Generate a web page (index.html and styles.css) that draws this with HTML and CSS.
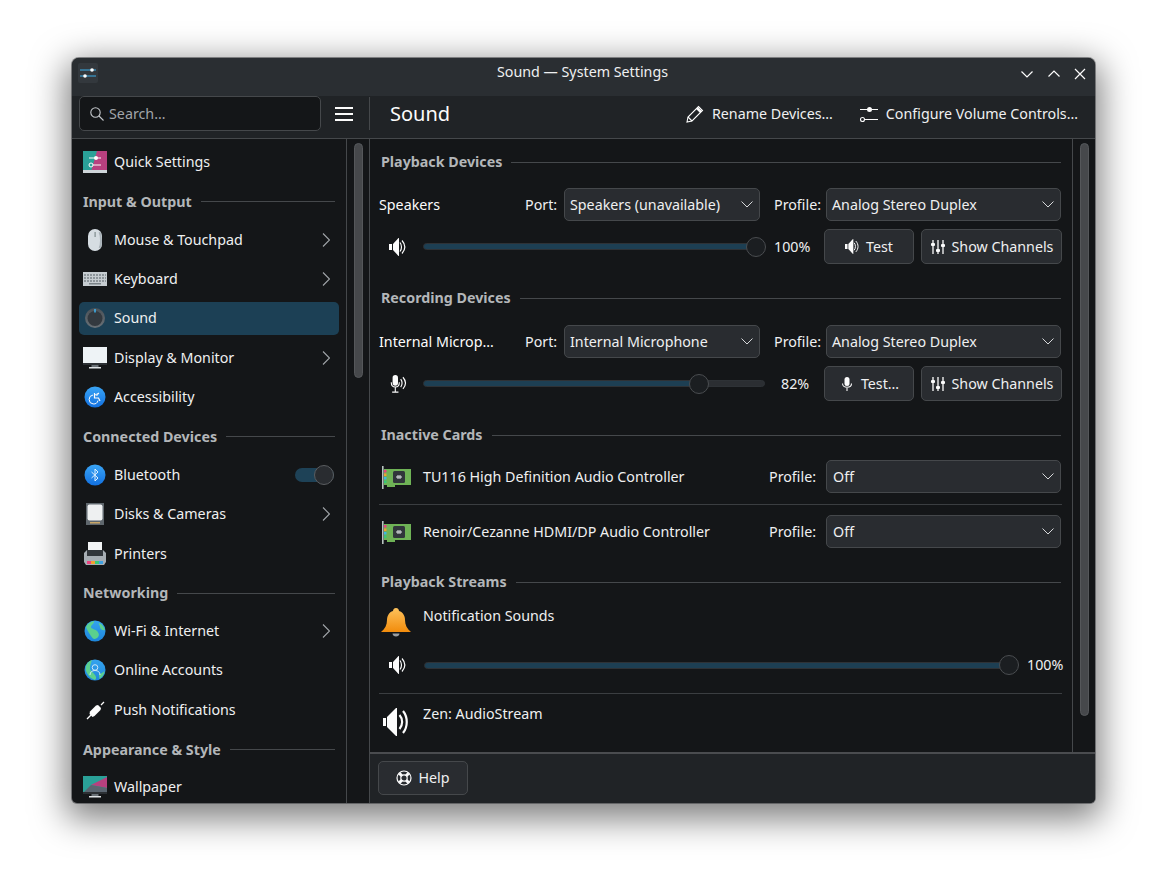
FILE: index.html
```html
<!DOCTYPE html>
<html lang="en">
<head>
<meta charset="utf-8">
<title>Sound — System Settings</title>
<link rel="stylesheet" href="styles.css">
</head>
<body>
<svg class="defs" width="0" height="0" aria-hidden="true">
  <defs>
    <symbol id="chev-down" viewBox="0 0 12 7"><path d="M.5 .5L6 6l5.500-5.500" fill="none" stroke="currentColor" stroke-width="1"/></symbol>
    <symbol id="chev-right" viewBox="0 0 8 14"><path d="M1 .5L7.500 7 1 13.500" fill="none" stroke="currentColor" stroke-width="1.100"/></symbol>
    <symbol id="speaker" viewBox="0 0 18 18"><path d="M0 6h3v6H0z" fill="#fcfcfc"/><path d="M4 6L9.500 0h.5v18h-.5L4 12z" fill="#fcfcfc"/><path d="M11 4.500c2 2.500 2 6.500 0 9M13 2.500c3.500 4 3.500 9 0 13" fill="none" stroke="#fcfcfc" stroke-width="1.200"/></symbol>
    <symbol id="channels" viewBox="0 0 16 16"><path d="M3 1v14M8 1v14M13 1v14" stroke="#fcfcfc" stroke-width="1.300" fill="none"/><rect x="1" y="4" width="4" height="3" rx="1" fill="#fcfcfc"/><rect x="6" y="10" width="4" height="3" rx="1" fill="#fcfcfc"/><rect x="11" y="5" width="4" height="3" rx="1" fill="#fcfcfc"/></symbol>
    <symbol id="card" viewBox="0 0 32 24">
      <rect x="1" y="1" width="1.600" height="23" fill="#b8c4c0"/>
      <path d="M3 4h27v16H14v2H6v-2H3z" fill="#6fb356"/>
      <rect x="3" y="5" width="2.500" height="2.500" fill="#e9437f"/><rect x="3" y="8.500" width="2.500" height="2.500" fill="#f0a030"/><rect x="3" y="12" width="2.500" height="2.500" fill="#3fb8e0"/><rect x="3" y="15.500" width="2.500" height="2.500" fill="#38c878"/>
      <rect x="12" y="6" width="12" height="12" rx="1.500" fill="#31363b"/>
      <path d="M15 12h6M17 10v4M19 10v4" stroke="#dfe3e6" stroke-width="1"/>
    </symbol>
    <linearGradient id="globe" x1="0" y1="0" x2="0" y2="1"><stop offset="0" stop-color="#35a4ee"/><stop offset="1" stop-color="#1d86dc"/></linearGradient>
    <linearGradient id="bluec" x1="0" y1="0" x2="0" y2="1"><stop offset="0" stop-color="#3aa5f5"/><stop offset="1" stop-color="#1270e0"/></linearGradient>
    <linearGradient id="bell" x1="0" y1="0" x2="0" y2="1"><stop offset="0" stop-color="#fdc25c"/><stop offset="1" stop-color="#f28c0c"/></linearGradient>
    <linearGradient id="knob" x1="0" y1="0" x2="0" y2="1"><stop offset="0" stop-color="#4a5157"/><stop offset="1" stop-color="#6a7177"/></linearGradient>
  </defs>
</svg>

<main class="window">
  <header class="titlebar">
    <svg class="app-icon" width="20" height="20" viewBox="0 0 20 20"><rect width="20" height="20" rx="2" fill="#33383d"/><path d="M2 7h16" stroke="#3daee9" stroke-width="1.200"/><path d="M2 13h16" stroke="#3daee9" stroke-width="1.200"/><circle cx="14" cy="7" r="1.800" fill="#fcfcfc"/><circle cx="7" cy="13" r="1.800" fill="#fcfcfc"/></svg>
    <h1 class="win-title">Sound — System Settings</h1>
    <div class="win-buttons">
      <svg class="win-btn win-min" width="14" height="14" viewBox="0 0 14 14"><path d="M1.500 4.500L7 10l5.500-5.500" fill="none" stroke="#fcfcfc" stroke-width="1.200"/></svg>
      <svg class="win-btn" width="14" height="14" viewBox="0 0 14 14"><path d="M1.500 9.500L7 4l5.500 5.500" fill="none" stroke="#fcfcfc" stroke-width="1.200"/></svg>
      <svg class="win-btn" width="14" height="14" viewBox="0 0 14 14"><path d="M2 2l10 10M12 2L2 12" fill="none" stroke="#fcfcfc" stroke-width="1.200"/></svg>
    </div>
  </header>

  <div class="toolbar">
    <div class="tb-left">
      <div class="search">
        <svg width="16" height="16" viewBox="0 0 16 16"><circle cx="6.500" cy="6.500" r="4.700" fill="none" stroke="#c4c8cc" stroke-width="1.100"/><path d="M10 10l4.500 4.500" stroke="#c4c8cc" stroke-width="1.100"/></svg>
        <span class="search-text">Search…</span>
      </div>
      <svg class="burger" width="18" height="14" viewBox="0 0 18 14"><path d="M0 1h18M0 7h18M0 13h18" stroke="#fcfcfc" stroke-width="2"/></svg>
    </div>
    <div class="tb-right">
      <h2 class="page-title">Sound</h2>
      <div class="tb-action">
        <svg width="18" height="18" viewBox="0 0 18 18"><path d="M1 17l1-5L12.500 1.500l4 4L6 16z" fill="none" stroke="#fcfcfc" stroke-width="1.100"/><path d="M11 3l4 4" stroke="#fcfcfc" stroke-width="2.500"/><path d="M2 12l4 4" stroke="#fcfcfc" stroke-width="1.100"/></svg>
        <span>Rename Devices…</span>
      </div>
      <div class="tb-action tb-action-last">
        <svg width="18" height="18" viewBox="0 0 18 18"><path d="M0 4.500h18" stroke="#fcfcfc" stroke-width="1.100"/><circle cx="9.500" cy="4.500" r="2.500" fill="#fcfcfc"/><path d="M5 14.500h13" stroke="#fcfcfc" stroke-width="1.100"/><circle cx="2.500" cy="14.500" r="2" fill="#1f2226" stroke="#fcfcfc" stroke-width="1.100"/></svg>
        <span>Configure Volume Controls…</span>
      </div>
    </div>
  </div>

  <div class="body-row">
    <nav class="sidebar">
      <div class="side-item">
        <svg class="side-icon" width="24" height="22" viewBox="0 0 24 22"><rect width="24" height="21" fill="#2aa198"/><path d="M14 0h10v21H8z" fill="#b8407f"/><rect y="19" width="24" height="3" fill="#d0d6da"/><path d="M6 7h12M6 14h12" stroke="#fcfcfc" stroke-width="1"/><circle cx="13" cy="7" r="2" fill="#fcfcfc"/><circle cx="8" cy="14" r="2" fill="#2aa198" stroke="#fcfcfc"/></svg>
        <span>Quick Settings</span>
      </div>
      <div class="side-head"><span>Input &amp; Output</span></div>
      <div class="side-item">
        <svg class="side-icon" width="24" height="22" viewBox="0 0 24 22"><rect x="5" y="0" width="14" height="22" rx="7" fill="#d6dde2"/><rect x="11.500" y="3" width="1.200" height="5" fill="#7f8c8d"/><path d="M16.500 3c2 4 2 13 0 16" stroke="#aab3b9" stroke-width="2" fill="none"/></svg>
        <span>Mouse &amp; Touchpad</span>
        <svg class="chev" width="8" height="14"><use href="#chev-right"/></svg>
      </div>
      <div class="side-item">
        <svg class="side-icon" width="24" height="16" viewBox="0 0 24 16"><rect width="24" height="14" y="1" fill="#c6ccd0"/><path d="M1 4h22M1 7h22M1 10h22" stroke="#7b8388" stroke-width="1.300" stroke-dasharray="2 1"/><rect x="6" y="12" width="12" height="1.500" fill="#7b8388"/></svg>
        <span>Keyboard</span>
        <svg class="chev" width="8" height="14"><use href="#chev-right"/></svg>
      </div>
      <div class="side-item selected">
        <svg class="side-icon" width="24" height="24" viewBox="0 0 24 24"><circle cx="12" cy="12" r="10" fill="url(#knob)"/><circle cx="12" cy="12.500" r="7.500" fill="#33393f"/><rect x="11.200" y="3" width="1.600" height="3.500" fill="#3daee9"/></svg>
        <span>Sound</span>
      </div>
      <div class="side-item">
        <svg class="side-icon" width="24" height="22" viewBox="0 0 24 22"><rect y="0" width="24" height="18" fill="#eef3f6"/><rect y="16" width="24" height="2" fill="#2c3034"/><rect x="8.500" y="18" width="7" height="2" fill="#6b7278"/><rect x="6" y="20" width="12" height="1.500" fill="#dfe3e6"/></svg>
        <span>Display &amp; Monitor</span>
        <svg class="chev" width="8" height="14"><use href="#chev-right"/></svg>
      </div>
      <div class="side-item">
        <svg class="side-icon" width="24" height="24" viewBox="0 0 24 24"><circle cx="12" cy="12" r="10.500" fill="url(#bluec)"/><path d="M10 10a4.500 4.500 0 1 0 5 5.500" fill="none" stroke="#fcfcfc" stroke-width="1"/><path d="M11.500 8v5h4l1.500 3" fill="none" stroke="#fcfcfc" stroke-width="1.200"/><path d="M12 10l4-2-2.500 3" fill="none" stroke="#fcfcfc"/></svg>
        <span>Accessibility</span>
      </div>
      <div class="side-head"><span>Connected Devices</span></div>
      <div class="side-item">
        <svg class="side-icon" width="24" height="24" viewBox="0 0 24 24"><circle cx="12" cy="12" r="10.500" fill="url(#bluec)"/><path d="M8.500 9l6.500 6-3 3V6l3 3-6.500 6" fill="none" stroke="#dff1ff" stroke-width="1"/></svg>
        <span>Bluetooth</span>
        <span class="toggle"><span class="toggle-knob"></span></span>
      </div>
      <div class="side-item">
        <svg class="side-icon" width="24" height="24" viewBox="0 0 24 24"><rect x="3" y="1" width="18" height="22" fill="#5f676d"/><rect x="4.500" y="2.500" width="15" height="16" rx="2" fill="#eef0f1"/><rect x="7" y="20" width="10" height="1.500" fill="#c9a667"/></svg>
        <span>Disks &amp; Cameras</span>
        <svg class="chev" width="8" height="14"><use href="#chev-right"/></svg>
      </div>
      <div class="side-item">
        <svg class="side-icon" width="24" height="24" viewBox="0 0 24 24"><rect x="5" y="0" width="14" height="9" fill="#f2f4f5"/><path d="M1 11l3-3h16l3 3v9l-2 3H3l-2-3z" fill="#a6adb3"/><rect x="4" y="8" width="16" height="6" fill="#31363b"/><rect x="4" y="19" width="4" height="3" fill="#e9437f"/><rect x="8" y="19" width="4" height="3" fill="#f0a030"/><rect x="12" y="19" width="4" height="3" fill="#38c878"/><rect x="16" y="19" width="4" height="3" fill="#3fa0e0"/></svg>
        <span>Printers</span>
      </div>
      <div class="side-head"><span>Networking</span></div>
      <div class="side-item">
        <svg class="side-icon" width="24" height="24" viewBox="0 0 24 24"><circle cx="12" cy="12" r="10.500" fill="url(#globe)"/><path d="M3 8c1-3 4-5 8-6 1 2-3 4-3 6s4 2 6 4 3 5 0 7-4 1-6-2-4-6-5-9zM16 4c3 1 5 4 6 7-2 1-5-1-5-3s-2-3-1-4z" fill="#5bd08e"/></svg>
        <span>Wi-Fi &amp; Internet</span>
        <svg class="chev" width="8" height="14"><use href="#chev-right"/></svg>
      </div>
      <div class="side-item">
        <svg class="side-icon" width="24" height="24" viewBox="0 0 24 24"><circle cx="12" cy="12" r="10.500" fill="url(#globe)"/><path d="M3 8c1-3 3-5 6-6-1 3-2 5-2 8s3 4 5 7 1 4 0 5c-3-1-6-3-8-7s-1-5-1-7zM16 16c2 0 4-2 5.500-3 0 3-2 6-5 8z" fill="#5bd08e"/><circle cx="12" cy="9.500" r="2.800" fill="none" stroke="#cfe8f7"/><path d="M7 17c0-3 2-4.500 5-4.500s5 1.500 5 4.500" fill="none" stroke="#cfe8f7"/></svg>
        <span>Online Accounts</span>
      </div>
      <div class="side-item">
        <svg class="side-icon" width="24" height="24" viewBox="0 0 24 24"><path d="M4 21l4-4M18 7l3-3" stroke="#fcfcfc" stroke-width="1.300"/><path d="M7 13.500l6-6 2-.5 3 3-.5 2-6 6-2 1-3-3z" fill="#fcfcfc"/></svg>
        <span>Push Notifications</span>
      </div>
      <div class="side-head"><span>Appearance &amp; Style</span></div>
      <div class="side-item">
        <svg class="side-icon" width="24" height="22" viewBox="0 0 24 22"><rect width="24" height="17" fill="#2aa198"/><path d="M8 9L24 1v11z" fill="#b8407f"/><path d="M0 17l8-8 16 3v5z" fill="#5a6570"/><rect y="16" width="24" height="2" fill="#2c3034"/><rect x="8.500" y="18" width="7" height="2" fill="#6b7278"/><rect x="6" y="20" width="12" height="1.500" fill="#dfe3e6"/></svg>
        <span>Wallpaper</span>
      </div>
    </nav>
    <div class="vbar-col vbar-side"><div class="vbar-thumb thumb-side"></div></div>

    <section class="pane">
      <div class="pane-top">
        <div class="content">
          <div class="sec-title"><span>Playback Devices</span></div>
          <div class="dev-row">
            <span class="dev-name">Speakers</span>
            <span class="lbl port-lbl">Port:</span>
            <div class="combo port-combo"><span>Speakers (unavailable)</span><svg width="12" height="7"><use href="#chev-down"/></svg></div>
            <span class="lbl profile-lbl">Profile:</span>
            <div class="combo profile-combo"><span>Analog Stereo Duplex</span><svg width="12" height="7"><use href="#chev-down"/></svg></div>
          </div>
          <div class="vol-row">
            <svg class="vol-icon" width="18" height="18"><use href="#speaker"/></svg>
            <div class="slider"><div class="fill" style="width:100%"></div><div class="thumb" style="left:100%"></div></div>
            <span class="pct">100%</span>
            <div class="btn btn-test"><svg width="15" height="15"><use href="#speaker"/></svg><span>Test</span></div>
            <div class="btn btn-chan"><svg width="16" height="16"><use href="#channels"/></svg><span>Show Channels</span></div>
          </div>

          <div class="sec-title next"><span>Recording Devices</span></div>
          <div class="dev-row dev-row-rec">
            <span class="dev-name">Internal Microp…</span>
            <span class="lbl port-lbl">Port:</span>
            <div class="combo port-combo"><span>Internal Microphone</span><svg width="12" height="7"><use href="#chev-down"/></svg></div>
            <span class="lbl profile-lbl">Profile:</span>
            <div class="combo profile-combo"><span>Analog Stereo Duplex</span><svg width="12" height="7"><use href="#chev-down"/></svg></div>
          </div>
          <div class="vol-row">
            <svg class="vol-icon" width="18" height="18" viewBox="0 0 20 20"><rect x="4" y="0" width="6" height="12" rx="3" fill="#fcfcfc"/><path d="M2.500 8c0 7 9 7 9 0M7 14v4.500M3.500 19h7" fill="none" stroke="#fcfcfc" stroke-width="1.200"/><path d="M13 4.500c2 2.500 2 6.500 0 9M15.500 2.500c3.500 4 3.500 9 0 13" fill="none" stroke="#fcfcfc" stroke-width="1.300"/></svg>
            <div class="slider slider-mic"><div class="fill" style="width:81%"></div><div class="thumb" style="left:81%"></div></div>
            <span class="pct pct-right">82%</span>
            <div class="btn btn-test"><svg width="16" height="16" viewBox="0 0 16 16"><rect x="5.500" y="1" width="5" height="9" rx="2.500" fill="#fcfcfc"/><path d="M3.500 7.500c0 5 9 5 9 0M8 12v3" fill="none" stroke="#fcfcfc" stroke-width="1.100"/></svg><span>Test…</span></div>
            <div class="btn btn-chan"><svg width="16" height="16"><use href="#channels"/></svg><span>Show Channels</span></div>
          </div>

          <div class="sec-title next"><span>Inactive Cards</span></div>
          <div class="card-row card-first">
            <svg class="card-icon" width="32" height="24"><use href="#card"/></svg>
            <span class="card-name">TU116 High Definition Audio Controller</span>
            <span class="lbl">Profile:</span>
            <div class="combo profile-combo"><span>Off</span><svg width="12" height="7"><use href="#chev-down"/></svg></div>
          </div>
          <div class="sep"></div>
          <div class="card-row">
            <svg class="card-icon" width="32" height="24"><use href="#card"/></svg>
            <span class="card-name">Renoir/Cezanne HDMI/DP Audio Controller</span>
            <span class="lbl">Profile:</span>
            <div class="combo profile-combo"><span>Off</span><svg width="12" height="7"><use href="#chev-down"/></svg></div>
          </div>

          <div class="sec-title next"><span>Playback Streams</span></div>
          <div class="stream-head">
            <svg class="stream-icon" width="32" height="32" viewBox="0 0 32 32"><path d="M16 1c2 0 3 1.500 3 3 4 1 6 5 6 9 0 5 2 9 6 12H1c4-3 6-7 6-12 0-4 2-8 6-9 0-1.500 1-3 3-3z" fill="url(#bell)"/><path d="M12.500 26.500h7c0 4-7 4-7 0z" fill="#9a9da0"/></svg>
            <span>Notification Sounds</span>
          </div>
          <div class="vol-row stream-vol">
            <svg class="vol-icon" width="18" height="18"><use href="#speaker"/></svg>
            <div class="slider slider-wide"><div class="fill" style="width:100%"></div><div class="thumb" style="left:100%"></div></div>
            <span class="pct pct-wide">100%</span>
          </div>
          <div class="sep sep-stream"></div>
          <div class="stream-head zen">
            <svg class="stream-icon" width="32" height="32" viewBox="0 0 32 32"><path d="M3 12h3v8H3z" fill="#fcfcfc"/><path d="M7 11l9-9h1v28h-1l-9-9z" fill="#fcfcfc"/><path d="M19.500 9c3.500 4 3.500 10 0 14M23 5c5 6 5 16 0 22" fill="none" stroke="#fcfcfc" stroke-width="2.200"/></svg>
            <span>Zen: AudioStream</span>
          </div>
        </div>
        <div class="vbar-col vbar-main"><div class="vbar-thumb thumb-main"></div></div>
      </div>
      <footer class="footer">
        <div class="btn btn-help">
          <svg width="16" height="16" viewBox="0 0 16 16"><circle cx="8" cy="8" r="7" fill="none" stroke="#fcfcfc" stroke-width="1.200"/><circle cx="8" cy="8" r="3.200" fill="none" stroke="#fcfcfc" stroke-width="1.200"/><path d="M3.300 3.300l2.500 2.500M12.700 3.300l-2.500 2.500M3.300 12.700l2.500-2.500M12.700 12.700l-2.500-2.500" stroke="#fcfcfc" stroke-width="3"/></svg>
          <span>Help</span>
        </div>
      </footer>
    </section>
  </div>
</main>
</body>
</html>
```

FILE: styles.css
```css
* { box-sizing: border-box; }

html, body { height: 100%; }

body {
  margin: 0;
  background: #fff;
  padding: 58px 71px 0 72px;
  overflow: hidden;
  font-family: "Noto Sans", sans-serif;
  font-size: 14.27px;
  line-height: 20px;
  color: #fcfcfc;
}

.defs { position: absolute; }

h1, h2 { margin: 0; font-weight: 400; }

.window {
  width: 1023px;
  height: 745px;
  display: flex;
  flex-direction: column;
  background: #141618;
  border-radius: 7px 7px 5px 5px;
  overflow: hidden;
  box-shadow: 0 0 0 1px rgba(60, 62, 66, .55), 0 10px 34px 6px rgba(0, 0, 0, .5);
}

/* Title bar */
.titlebar {
  height: 38px;
  flex: none;
  display: grid;
  grid-template-columns: 1fr auto 1fr;
  align-items: center;
  background: #2a2e32;
  padding: 0 8px 0 6px;
}
.app-icon { margin-top: -9px; }
.win-title {
  font-size: 14.27px;
  margin-top: -10px;
  color: #eff0f1;
}
.win-buttons { display: flex; justify-content: flex-end; gap: 12px; margin-top: -7px; }
.win-min { margin-right: 1px; }

/* Toolbar */
.toolbar {
  height: 43px;
  flex: none;
  display: flex;
  background: #202326;
  border-bottom: 1px solid #45484b;
}
.tb-left {
  width: 298px;
  flex: none;
  display: flex;
  align-items: center;
  padding: 0 0 7px 7px;
  position: relative;
}
.tb-left::after {
  content: "";
  position: absolute;
  right: 0;
  top: 1px;
  height: 33px;
  width: 1px;
  background: #45484b;
}
.search {
  width: 242px;
  height: 35px;
  display: flex;
  align-items: center;
  gap: 4px;
  padding-left: 9px;
  background: #141618;
  border: 1px solid #45484b;
  border-radius: 5px;
}
.search-text { color: #a1a5a9; }
.burger { margin-left: 14px; }
.tb-right {
  flex: 1;
  display: flex;
  align-items: center;
  padding: 0 17px 7px 20px;
}
.page-title { font-size: 20px; flex: 1; color: #fcfcfc; }
.tb-action { display: flex; align-items: center; gap: 8px; color: #eff0f1; }
.tb-action-last { margin-left: 27px; }

/* Body */
.body-row { flex: 1; display: flex; min-height: 0; }

.sidebar {
  width: 275px;
  flex: none;
  padding: 3.500px 7px 0 7px;
  border-right: 1px solid #45484b;
  overflow: hidden;
}
.side-item {
  height: 39.400px;
  display: flex;
  align-items: center;
  position: relative;
  padding: 0 8px 0 4px;
  color: #eff0f1;
}
.side-item > span:first-of-type { flex: 1; }
.side-icon { margin-right: 7px; flex: none; }
.selected::before {
  content: "";
  position: absolute;
  left: 0;
  right: 0;
  top: 3px;
  height: 33px;
  background: #1c4055;
  border-radius: 5px;
  z-index: 0;
}
.selected > * { position: relative; z-index: 1; }
.chev { color: #a1a5a9; flex: none; margin-right: 1px; }
.side-head {
  height: 38.100px;
  display: flex;
  align-items: center;
  gap: 9px;
  padding: 2px 4px 0 4px;
  font-weight: 700;
  color: #b3b6b9;
}
.side-head::after {
  content: "";
  flex: 1;
  height: 1px;
  background: #45484b;
}
.toggle {
  width: 39px;
  height: 14px;
  background: #1e4257;
  border-radius: 7px;
  position: relative;
  flex: none;
  margin-right: -3px;
}
.toggle-knob {
  position: absolute;
  right: 0;
  top: -3px;
  width: 20px;
  height: 20px;
  border-radius: 50%;
  background: #292c30;
  border: 1px solid #5a5d60;
}

.vbar-col { flex: none; position: relative; background: #141618; }
.vbar-side { width: 23px; border-right: 1px solid #45484b; }
.vbar-main { width: 23px; border-left: 1px solid #45484b; }
.vbar-thumb {
  position: absolute;
  width: 9px;
  top: 4px;
  background: #46484b;
  border: 1px solid #55575a;
  border-radius: 5px;
}
.thumb-side { left: 7px; height: 235px; }
.thumb-main { left: 7px; height: 573px; }

/* Right pane */
.pane { flex: 1; min-width: 0; display: flex; flex-direction: column; }
.pane-top { flex: 1; min-height: 0; display: flex; border-bottom: 2px solid #4a4c4f; }
.content { flex: 1; min-width: 0; padding: 13px 10px 0 9px; overflow: hidden; }

.sec-title {
  height: 20px;
  display: flex;
  align-items: center;
  gap: 9px;
  padding: 0 1px 0 2px;
  font-weight: 700;
  color: #b3b6b9;
}
.sec-title::after { content: ""; flex: 1; height: 1px; background: #45484b; }
.sec-title.next { margin-top: 24px; }

.dev-row { display: flex; align-items: center; height: 33px; margin-top: 16px; }
.dev-row-rec { margin-top: 17px; }
.dev-name { width: 146px; flex: none; }
.lbl { flex: none; color: #eff0f1; }
.port-lbl { width: 39px; }
.profile-lbl { width: 52px; margin-left: 14px; }

.combo {
  height: 33px;
  display: flex;
  align-items: center;
  justify-content: space-between;
  padding: 0 6px 0 5px;
  background: #292c30;
  border: 1px solid #45484b;
  border-radius: 5px;
  color: #eff0f1;
  flex: none;
}
.combo svg { color: #d6d8da; }
.port-combo { width: 196px; }
.profile-combo { width: 235px; }

.vol-row { display: flex; align-items: center; height: 35px; margin-top: 8px; }
.vol-icon { margin-left: 10px; flex: none; }
.slider {
  width: 334px;
  height: 7px;
  margin-left: 16px;
  background: #2b2e32;
  border: 1px solid #2e3236;
  border-radius: 4px;
  position: relative;
  flex: none;
}
.slider-mic { width: 342px; }
.slider-wide { width: 586px; margin-left: 17px; }
.fill { height: 100%; background: #1d3f53; border-radius: 3px; }
.thumb {
  position: absolute;
  top: 50%;
  width: 20px;
  height: 20px;
  margin: -10px 0 0 -10px;
  border-radius: 50%;
  background: #1b1e21;
  border: 1px solid #4a4d50;
}

.pct { width: 36px; margin-left: 17px; flex: none; color: #eff0f1; }
.pct-right { width: 28px; margin-left: 16px; margin-right: 1px; text-align: right; }
.btn {
  height: 35px;
  display: flex;
  align-items: center;
  justify-content: center;
  gap: 6px;
  background: #292c30;
  border: 1px solid #45484b;
  border-radius: 5px;
  color: #eff0f1;
  flex: none;
}
.btn-test { width: 90px; margin-left: 14px; }
.btn-chan { width: 141px; margin-left: 7px; }

.card-row { display: flex; align-items: center; height: 33px; padding-right: 1px; }
.card-row .combo { padding-left: 6px; }
.card-first { margin-top: 15px; }
.card-icon { margin-left: 2px; flex: none; }
.card-name { flex: 1; margin-left: 10px; color: #eff0f1; }
.card-row .lbl { width: 57px; }
.sep { height: 1px; background: #3b3e41; margin: 11px 0 10px 0; }
.sep-stream { margin: 15px 0 0 0; }

.stream-head {
  display: flex;
  align-items: flex-start;
  height: 40px;
  margin-top: 12px;
  line-height: 24px;
  color: #eff0f1;
}
.stream-icon { margin: 3px 11px 0 1px; flex: none; }
.stream-vol { height: 26px; margin-top: 8px; }
.zen { margin-top: 8px; }
.zen .stream-icon { margin-top: 4px; }

.footer { height: 49px; flex: none; background: #202326; padding: 7px 8px; }
.btn-help { width: 90px; height: 34px; }
```
